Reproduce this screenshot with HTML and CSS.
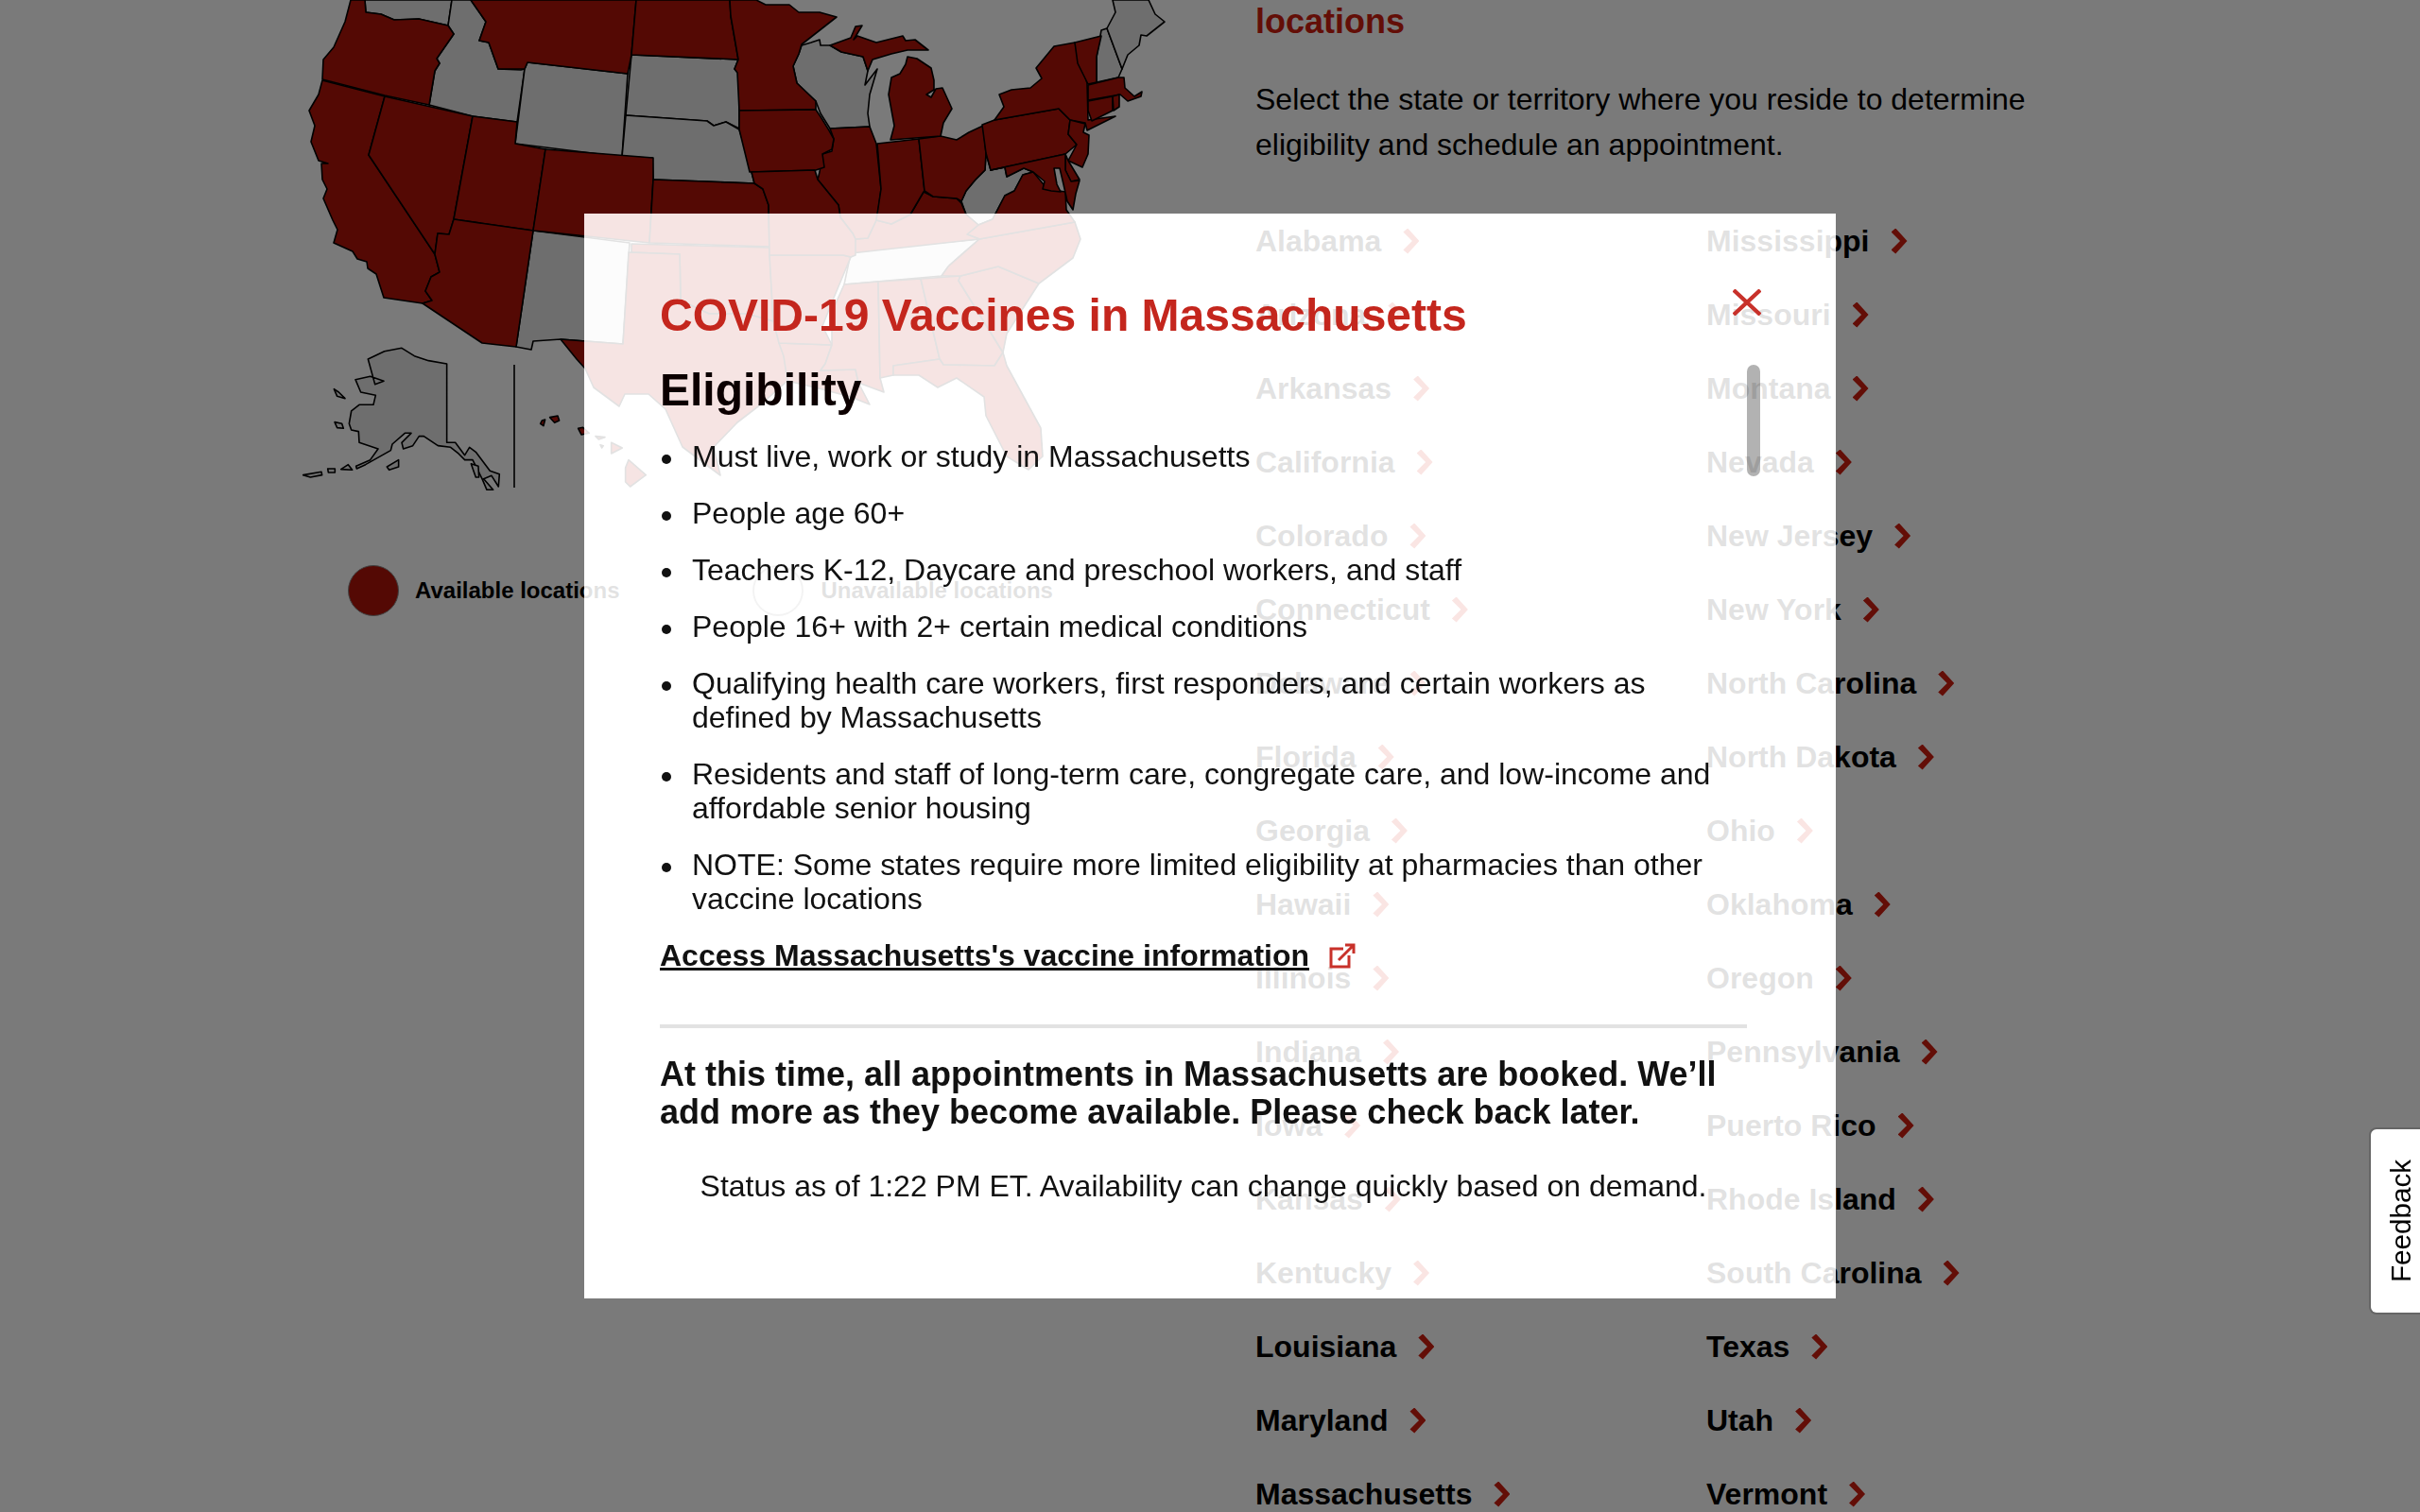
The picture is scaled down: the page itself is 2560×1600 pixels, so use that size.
FILE: index.html
```html
<!DOCTYPE html>
<html lang="en">
<head>
<meta charset="utf-8">
<title>COVID-19 Vaccines</title>
<link rel="stylesheet" href="styles.css">
</head>
<body>
<div class="page">
  <section class="map-col">
    <svg class="map" viewBox="0 0 1328 598" aria-label="Map of the United States">
      <g class="off">
        <polygon points="386,0 478,0 474,27 443,20 417,21 403,15 387,13"/>
        <polygon points="478,0 498,0 514,23 507,43 517,45 527,73 551,74 555,73 547,129 500,123 454,111 460,75 465,67 462,62 480,36 474,27"/>
        <polygon points="558,66 664,78 658,166 545,152 555,73"/>
        <polygon points="668,58 781,63 777,73 782,77 782,136 768,129 755,133 748,128 662,122"/>
        <polygon points="662,122 748,128 755,133 768,129 782,137 792,170 798,194 691,190 690,167 658,166"/>
        <polygon points="564,244 666,257 659,364 593,359 564,361 562,370 546,367"/>
        <polygon points="848,48 858,45 867,42 868,48 878,48 890,55 913,60 918,75 915,90 928,73 920,100 918,120 920,134 878,136 868,120 863,107 843,88 839,70 845,57"/>
        <polygon points="1043,162 1048,180 1063,177 1065,187 1083,178 1093,182 1082,185 1073,202 1063,207 1050,232 1035,238 1022,227 1017,213 1022,202 1032,190 1042,180"/>
        <polygon points="900,268 929,263 1036,253 1005,280 996,292 893,301"/>
        <polygon points="1165,32 1171,30 1187,73 1183,82 1160,87 1160,60"/>
        <polygon points="1177,0 1215,0 1222,15 1232,23 1213,38 1207,37 1205,48 1193,58 1187,73 1171,30 1180,13"/>
      </g>
      <g class="on">
        <polygon points="371,0 386,0 387,13 403,15 417,21 443,20 474,27 480,36 462,62 465,67 460,75 454,111 407,101 341,84 342,63 353,50 365,23"/>
        <polygon points="341,85 407,102 390,164 460,269 465,288 456,293 450,308 457,318 447,321 406,315 398,290 389,284 388,277 378,274 373,266 353,257 357,243 352,233 342,210 346,200 341,190 340,173 347,173 337,170 329,150 333,133 327,117 337,100"/>
        <polygon points="407,102 500,123 480,232 475,248 463,247 460,269 390,164"/>
        <polygon points="498,0 673,0 668,58 664,78 558,66 555,73 527,73 517,45 507,43 514,23"/>
        <polygon points="673,0 772,0 773,17 777,40 781,63 668,58"/>
        <polygon points="500,123 547,129 545,152 577,158 564,244 480,232"/>
        <polygon points="577,158 691,167 691,190 687,257 564,244"/>
        <polygon points="480,232 564,244 546,367 510,363 447,321 457,318 450,308 456,293 465,288 460,269 463,247 475,248"/>
        <polygon points="691,190 798,194 807,200 813,217 814,261 687,257"/>
        <polygon points="668,258 814,262 818,340 790,332 750,332 720,318 719,269 668,267"/>
        <polygon points="665,267 719,269 720,318 750,332 790,332 818,340 824,347 829,377 835,390 833,403 806,427 780,447 755,473 762,503 722,473 704,433 686,417 661,417 655,430 628,410 619,390 610,380 593,359 659,364"/>
        <polygon points="824,363 880,365 873,385 868,392 905,391 908,405 920,428 900,420 870,412 833,403 829,377"/>
        <polygon points="814,270 892,270 900,272 880,320 870,345 880,365 824,363 818,340"/>
        <polygon points="893,301 929,298 931,400 935,415 908,405 905,391 868,392 873,385 880,365 880,330"/>
        <polygon points="929,298 974,295 994,380 945,387 945,397 931,400"/>
        <polygon points="974,295 1016,292 1014,297 1061,373 1052,387 998,386 994,380"/>
        <polygon points="945,387 994,380 998,386 1052,387 1061,373 1065,387 1101,453 1103,483 1088,497 1065,483 1043,440 1041,420 1012,400 992,410 972,397 945,397"/>
        <polygon points="1016,292 1056,282 1099,300 1065,353 1061,373 1014,297"/>
        <polygon points="1003,282 1036,253 1137,235 1143,253 1135,273 1099,300 1056,282 1016,292 996,292"/>
        <polygon points="1036,253 1023,248 1035,238 1050,232 1063,207 1073,202 1082,185 1093,182 1108,200 1127,203 1128,222 1137,235"/>
        <polygon points="900,268 1036,253 1023,248 1035,238 1022,227 1017,215 1012,210 987,208 977,203 963,227 943,237 927,233 918,252 905,253"/>
        <polygon points="878,136 920,134 927,152 932,200 929,223 927,233 918,252 905,253 902,247 889,230 887,217 865,190 867,182 870,163 880,160 882,147"/>
        <polygon points="928,152 972,147 978,202 977,203 963,227 943,237 927,233 932,200"/>
        <polygon points="972,147 995,144 1012,148 1025,140 1040,133 1043,162 1042,180 1032,190 1022,202 1017,213 1012,210 987,208 978,202"/>
        <polygon points="960,60 970,62 985,72 988,85 988,95 980,100 985,103 990,94 997,93 1007,115 998,130 995,144 942,148 946,133 940,100 943,82 952,78 958,68"/>
        <polygon points="878,48 900,40 905,28 912,27 903,42 907,38 927,45 955,38 958,43 968,42 982,53 960,53 943,57 923,63 918,75 913,60 890,55"/>
        <polygon points="772,0 800,0 810,5 835,5 845,13 867,13 885,18 848,47 845,57 839,70 843,88 863,107 863,116 782,117 780,77 777,73 781,63 777,40 773,17"/>
        <polygon points="782,117 863,116 869,125 877,138 882,147 880,158 870,163 872,177 863,180 793,182 782,137"/>
        <polygon points="795,182 862,180 865,190 887,217 889,230 902,247 905,253 905,270 900,272 892,270 814,270 813,217 807,200 798,194"/>
        <polygon points="1039,132 1052,127 1120,115 1132,127 1130,142 1139,153 1127,163 1048,180 1043,162"/>
        <polygon points="1052,127 1062,113 1057,100 1070,95 1090,93 1102,83 1096,72 1115,49 1137,45 1150,88 1151,127 1180,123 1150,138 1148,130 1132,127 1120,115"/>
        <polygon points="1137,45 1165,38 1160,60 1160,87 1151,89 1140,67"/>
        <polygon points="1151,90 1183,82 1189,82 1190,93 1200,102 1208,97 1207,102 1193,107 1185,100 1151,106"/>
        <polygon points="1151,107 1177,102 1177,117 1155,128 1151,117"/>
        <polygon points="1177,102 1184,100 1184,113 1178,117"/>
        <polygon points="1132,127 1148,131 1146,140 1152,143 1151,163 1145,177 1130,170 1139,153 1130,142"/>
        <polygon points="1127,163 1130,170 1142,190 1133,192 1127,180"/>
        <polygon points="1048,180 1127,163 1127,180 1133,192 1142,191 1138,205 1135,222 1129,213 1125,195 1121,178 1115,178 1118,195 1122,203 1112,202 1103,200 1105,192 1093,182 1083,178 1065,187 1063,177"/>
      </g>
      <g class="off inset" transform="translate(300 340) scale(.3333)">
        <polygon points="268,120 320,95 375,85 415,110 460,125 518,135 518,385 545,385 575,425 590,400 610,415 655,475 685,485 682,525 660,490 635,500 665,535 645,535 630,500 600,440 575,440 555,420 530,400 490,395 445,365 430,365 410,395 380,405 375,385 405,355 385,355 345,390 340,410 260,455 232,468 230,460 275,440 300,405 240,385 238,350 215,345 208,325 215,285 240,265 285,265 292,235 245,225 228,185 275,175 318,190 290,200"/>
        <polygon points="160,215 175,225 195,245 170,238"/>
        <polygon points="162,320 185,325 190,340 170,338"/>
        <polygon points="62,488 120,478 122,488 85,495"/>
        <polygon points="140,468 163,468 163,480 142,480"/>
        <polygon points="182,470 205,455 218,472"/>
        <polygon points="328,462 365,440 365,462 335,472"/>
        <polygon points="595,452 618,460 620,495 610,495"/>
      </g>
      <g class="on inset" transform="translate(300 340) scale(.3333)">
        <polygon points="820,315 830,312 825,332 815,325"/>
        <polygon points="845,305 870,300 875,315 860,322"/>
        <polygon points="935,340 950,337 970,355 945,360"/>
        <polygon points="990,365 1020,368 1000,375"/>
        <polygon points="1005,392 1015,395 1010,402"/>
        <polygon points="1040,385 1075,402 1040,420"/>
        <polygon points="1095,440 1150,488 1100,525 1085,510 1085,465"/>
      </g>
      <line class="divider-line" x1="544" y1="386" x2="544" y2="516"/>
    </svg>
    <div class="legend">
      <span class="dot dot-on"></span><span class="legend-label">Available locations</span>
      <span class="dot dot-off"></span><span class="legend-label legend-muted">Unavailable locations</span>
    </div>
  </section>
  <section class="list-col">
    <h2 class="list-title">locations</h2>
    <p class="list-intro">Select the state or territory where you reside to determine eligibility and schedule an appointment.</p>
    <div class="states">
      <a class="state">Alabama</a><a class="state">Arizona</a><a class="state">Arkansas</a><a class="state">California</a><a class="state">Colorado</a><a class="state">Connecticut</a><a class="state">Delaware</a><a class="state">Florida</a><a class="state">Georgia</a><a class="state">Hawaii</a><a class="state">Illinois</a><a class="state">Indiana</a><a class="state">Iowa</a><a class="state">Kansas</a><a class="state">Kentucky</a><a class="state">Louisiana</a><a class="state">Maryland</a><a class="state">Massachusetts</a>
      <a class="state">Mississippi</a><a class="state">Missouri</a><a class="state">Montana</a><a class="state">Nevada</a><a class="state">New Jersey</a><a class="state">New York</a><a class="state">North Carolina</a><a class="state">North Dakota</a><a class="state">Ohio</a><a class="state">Oklahoma</a><a class="state">Oregon</a><a class="state">Pennsylvania</a><a class="state">Puerto Rico</a><a class="state">Rhode Island</a><a class="state">South Carolina</a><a class="state">Texas</a><a class="state">Utah</a><a class="state">Vermont</a>
    </div>
  </section>
</div>

<div class="modal">
  <svg class="close" viewBox="0 0 30 28"><path d="M1 1 29 27M29 1 1 27"/></svg>
  <div class="scrollbar"></div>
  <h1 class="modal-title">COVID-19 Vaccines in Massachusetts</h1>
  <h2 class="modal-sub">Eligibility</h2>
  <ul class="rules">
    <li>Must live, work or study in Massachusetts</li>
    <li>People age 60+</li>
    <li>Teachers K-12, Daycare and preschool workers, and staff</li>
    <li>People 16+ with 2+ certain medical conditions</li>
    <li>Qualifying health care workers, first responders, and certain workers as defined by Massachusetts</li>
    <li>Residents and staff of long-term care, congregate care, and low-income and affordable senior housing</li>
    <li>NOTE: Some states require more limited eligibility at pharmacies than other vaccine locations</li>
  </ul>
  <p class="access"><a class="access-link">Access Massachusetts's vaccine information</a><svg class="ext" viewBox="0 0 28 27"><path d="M15 6H2V25H21V13M10 18 26 2M17 2H26V11"/></svg></p>
  <hr class="rule">
  <p class="booked">At this time, all appointments in Massachusetts are booked. We’ll add more as they become available. Please check back later.</p>
  <p class="status">Status as of 1:22 PM ET. Availability can change quickly based on demand.</p>
</div>

<div class="feedback"><span class="feedback-text">Feedback</span></div>
</body>
</html>
```

FILE: styles.css
```css
* { box-sizing: border-box; }
html, body { margin: 0; height: 1600px; overflow: hidden; background: #fff; }
body { font-family: "Liberation Sans", Arial, sans-serif; color: #000; }

.page { display: flex; height: 1600px; overflow: hidden; }
.map-col { width: 1328px; flex: none; }
.map { display: block; width: 1328px; height: 598px; filter: blur(.5px); }
.map polygon { stroke: #000; stroke-width: 1.6; stroke-linejoin: round; }
.map .inset polygon { stroke-width: 4.8; }
.map .on { fill: #b0140a; }
.map .off { fill: #e6e6e6; }
.divider-line { stroke: #000; stroke-width: 1.6; }

.legend { display: flex; align-items: center; padding-left: 368px; }
.dot { width: 54px; height: 54px; border-radius: 50%; flex: none; }
.dot-on { background: #b0140a; border: 1px solid #888; }
.dot-off { background: #fff; border: 2px solid #999; margin-left: 140px; }
.legend-label { font-size: 24px; font-weight: 700; margin-left: 17px; line-height: 54px; }
.legend-muted { margin-left: 19px; }

.list-col { flex: 1; }
.list-title { margin: 0; padding-top: 1px; font-size: 36px; line-height: 44px; font-weight: 700; color: #d01e10; }
.list-intro { margin: 36px 0 0; width: 860px; font-size: 32px; line-height: 48px; }
.states { display: grid; grid-template-rows: repeat(18, 78px); grid-auto-flow: column; grid-template-columns: 477px 477px; margin-top: 39px; }
.state { display: flex; align-items: center; gap: 23px; font-size: 32px; font-weight: 700; line-height: 78px; height: 78px; }
.state::after { content: ""; width: 17px; height: 27px; background: #d01e10; clip-path: polygon(28% 0, 100% 50%, 28% 100%, 0 85%, 56% 50%, 0 15%); }

.modal { position: fixed; left: 618px; top: 226px; width: 1324px; height: 1148px; padding: 80px 94px 0 80px; background: rgba(255, 255, 255, .885); box-shadow: 0 0 0 3000px rgba(0, 0, 0, .52); color: #111; }
.close { position: absolute; left: 1215px; top: 80px; width: 30px; height: 28px; fill: none; stroke: #c8312a; stroke-width: 4.2; }
.scrollbar { position: absolute; left: 1230px; top: 160px; width: 14px; height: 118px; border-radius: 7px; background: rgba(0, 0, 0, .3); }
.modal-title { margin: 0; font-size: 48px; line-height: 56px; font-weight: 700; color: #c4261d; }
.modal-sub { margin: 23px 0 0; font-size: 48px; line-height: 56px; font-weight: 700; color: #0c0000; }
.rules { margin: 24px 0 0; padding: 0 0 0 34px; list-style: none; font-size: 32px; line-height: 36px; }
.rules li { position: relative; margin-bottom: 24px; }
.rules li::before { content: ""; position: absolute; left: -32px; top: 16px; width: 10px; height: 10px; border-radius: 50%; background: #111; }
.access { margin: 0; display: flex; align-items: center; gap: 21px; height: 36px; font-size: 32px; line-height: 36px; font-weight: 700; }
.access-link { text-decoration: underline; text-decoration-thickness: 3px; text-underline-offset: 2px; }
.ext { width: 28px; height: 27px; fill: none; stroke: #c8312a; stroke-width: 3; }
.rule { margin: 55px 0 0; border: 0; height: 4px; background: #e2e2e2; }
.booked { margin: 29px 0 0; font-size: 36px; line-height: 40px; font-weight: 700; }
.status { margin: 40px 0 0; font-size: 32px; line-height: 36px; text-align: center; }

.feedback { position: fixed; right: 0; top: 1193px; width: 54px; height: 198px; display: flex; align-items: center; justify-content: center; padding-left: 12px; background: #fff; border: 2px solid #666; border-right: 0; border-radius: 8px 0 0 8px; }
.feedback-text { writing-mode: vertical-rl; transform: rotate(180deg); font-size: 29.6px; line-height: 30px; color: #000; }
```
